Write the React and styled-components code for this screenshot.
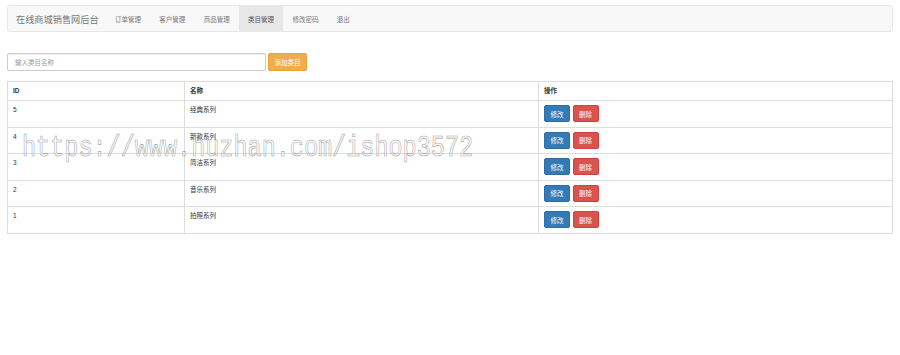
import React from 'react'
import styled, { createGlobalStyle } from 'styled-components';

const GlobalStyle = createGlobalStyle`
  html, body {
    margin: 0;
    padding: 0;
    background: #fff;
  }
  body {
    font-family: "Liberation Sans", "Noto Sans CJK SC", sans-serif;
    color: #333;
  }
`

const navItems = ['订单管理', '客户管理', '商品管理', '类目管理', '修改密码', '退出'];

const categories = [
  { id: 5, name: '经典系列' },
  { id: 4, name: '新款系列' },
  { id: 3, name: '简洁系列' },
  { id: 2, name: '音乐系列' },
  { id: 1, name: '拍照系列' },
];

const App = () => {
  return (
    <Page>
      <GlobalStyle />
      <Navbar>
        <Brand>在线商城销售网后台</Brand>
        <NavList>
          {navItems.map((item) => (
            <NavItem key={item} active={item === '类目管理'}>{item}</NavItem>
          ))}
        </NavList>
      </Navbar>

      <AddForm>
        <NameInput placeholder="输入类目名称" />
        <Button variant="warning">添加类目</Button>
      </AddForm>

      <Table>
        <colgroup>
          <col style={{ width: '20%' }} />
          <col style={{ width: '40%' }} />
          <col style={{ width: '40%' }} />
        </colgroup>
        <thead>
          <tr>
            <Th>ID</Th>
            <Th>名称</Th>
            <Th>操作</Th>
          </tr>
        </thead>
        <tbody>
          {categories.map((c) => (
            <tr key={c.id}>
              <Td>{c.id}</Td>
              <Td>{c.name}</Td>
              <Td>
                <Actions>
                  <Button variant="primary">修改</Button>
                  <Button variant="danger">删除</Button>
                </Actions>
              </Td>
            </tr>
          ))}
        </tbody>
      </Table>

      <Watermark>https://www.huzhan.com/ishop3572</Watermark>
    </Page>
  );
};

export default App;

const Page = styled.div`
  position: relative;
  width: 900px;
  height: 355px;
  padding: 5px 7px 0;
  box-sizing: border-box;
  overflow: hidden;
`

const Navbar = styled.div`
  display: flex;
  align-items: stretch;
  height: 27px;
  box-sizing: border-box;
  background: #f8f8f8;
  border: 1px solid #e7e7e7;
  border-radius: 3px;
`

const Brand = styled.div`
  display: flex;
  align-items: center;
  padding: 0 7px 0 8px;
  font-size: 9.2px;
  color: #777;
  white-space: nowrap;
`

const NavList = styled.div`
  display: flex;
`

const NavItem = styled.div`
  display: flex;
  align-items: center;
  padding: 0 9.2px;
  font-size: 6.5px;
  color: ${(p) => (p.active ? '#555' : '#777')};
  background: ${(p) => (p.active ? '#e7e7e7' : 'transparent')};
  white-space: nowrap;
`

const AddForm = styled.div`
  display: flex;
  gap: 2px;
  margin-top: 21px;
  height: 18px;
`

const NameInput = styled.input`
  width: 259px;
  height: 18px;
  box-sizing: border-box;
  border: 1px solid #ccc;
  border-radius: 2px;
  padding: 0 7px;
  font-family: inherit;
  font-size: 6.5px;
  color: #555;
  outline: none;
  box-shadow: inset 0 1px 1px rgba(0,0,0,.075);
  &::placeholder {
    color: #999;
  }
`

const colors = {
  primary: { bg: '#337ab7', border: '#2e6da4' },
  danger: { bg: '#d9534f', border: '#d43f3a' },
  warning: { bg: '#f0ad4e', border: '#eea236' },
}

const Button = styled.button`
  display: inline-flex;
  align-items: center;
  justify-content: center;
  height: ${(p) => (p.variant === 'warning' ? '18px' : '17px')};
  padding: 0 5.5px;
  box-sizing: border-box;
  border: 1px solid ${(p) => colors[p.variant].border};
  background: ${(p) => colors[p.variant].bg};
  color: #fff;
  border-radius: 2px;
  font-family: inherit;
  font-size: 6.5px;
  cursor: pointer;
`

const Table = styled.table`
  width: 886px;
  margin-top: 10px;
  border-collapse: collapse;
  border: 1px solid #ddd;
  table-layout: fixed;
`

const Th = styled.th`
  text-align: left;
  font-size: 6.5px;
  font-weight: bold;
  line-height: 10px;
  padding: 4px 5px 4px;
  border: 1px solid #ddd;
  vertical-align: top;
`

const Td = styled.td`
  font-size: 6.5px;
  line-height: 10px;
  color: #333;
  padding: 4px 5px 4.5px;
  border: 1px solid #ddd;
  vertical-align: top;
`

const Actions = styled.div`
  display: flex;
  gap: 2.5px;
`

const Watermark = styled.div`
  position: absolute;
  left: 22px;
  top: 132px;
  font-family: "Liberation Mono", "DejaVu Sans Mono", monospace;
  font-size: 29px;
  transform: scaleX(0.81);
  transform-origin: left top;
  color: transparent;
  -webkit-text-stroke: 0.6px #a0a0a0;
  white-space: nowrap;
  pointer-events: none;
`
